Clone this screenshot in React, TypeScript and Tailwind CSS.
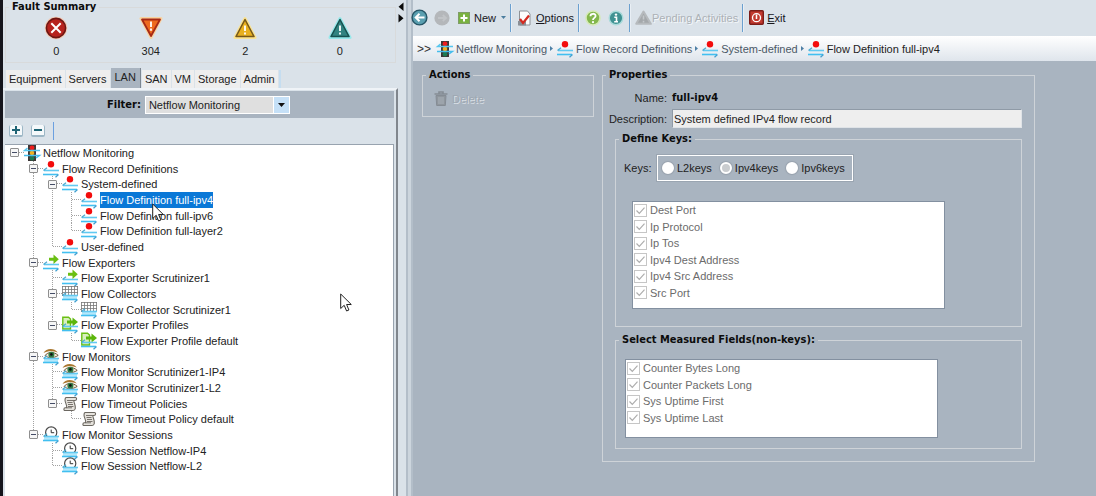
import type { ReactNode } from "react";

type IconName = "traffic" | "record" | "exporter" | "collector" | "profile" | "monitor" | "policy" | "session";

type TreeItem = { label: string; icon: IconName; depth: number; open?: boolean; selected?: boolean };

const TREE: TreeItem[] = [
  { label: "Netflow Monitoring", icon: "traffic", depth: 0, open: true },
  { label: "Flow Record Definitions", icon: "record", depth: 1, open: true },
  { label: "System-defined", icon: "record", depth: 2, open: true },
  { label: "Flow Definition full-ipv4", icon: "record", depth: 3, selected: true },
  { label: "Flow Definition full-ipv6", icon: "record", depth: 3 },
  { label: "Flow Definition full-layer2", icon: "record", depth: 3 },
  { label: "User-defined", icon: "record", depth: 2 },
  { label: "Flow Exporters", icon: "exporter", depth: 1, open: true },
  { label: "Flow Exporter Scrutinizer1", icon: "exporter", depth: 2 },
  { label: "Flow Collectors", icon: "collector", depth: 2, open: true },
  { label: "Flow Collector Scrutinizer1", icon: "collector", depth: 3 },
  { label: "Flow Exporter Profiles", icon: "profile", depth: 2, open: true },
  { label: "Flow Exporter Profile default", icon: "profile", depth: 3 },
  { label: "Flow Monitors", icon: "monitor", depth: 1, open: true },
  { label: "Flow Monitor Scrutinizer1-IP4", icon: "monitor", depth: 2 },
  { label: "Flow Monitor Scrutinizer1-L2", icon: "monitor", depth: 2 },
  { label: "Flow Timeout Policies", icon: "policy", depth: 2, open: true },
  { label: "Flow Timeout Policy default", icon: "policy", depth: 3 },
  { label: "Flow Monitor Sessions", icon: "session", depth: 1, open: true },
  { label: "Flow Session Netflow-IP4", icon: "session", depth: 2 },
  { label: "Flow Session Netflow-L2", icon: "session", depth: 2 },
];

const TABS = ["Equipment", "Servers", "LAN", "SAN", "VM", "Storage", "Admin"];
const KEY_FIELDS = ["Dest Port", "Ip Protocol", "Ip Tos", "Ipv4 Dest Address", "Ipv4 Src Address", "Src Port"];
const MEASURED_FIELDS = ["Counter Bytes Long", "Counter Packets Long", "Sys Uptime First", "Sys Uptime Last"];

const STRONG = "font-['DejaVu_Sans_Condensed','Noto_Sans',sans-serif] font-bold text-[#0c0c0c]";

// true when another node follows at this depth before the branch closes
function continues(index: number, depth: number): boolean {
  for (let i = index + 1; i < TREE.length; i++) {
    if (TREE[i].depth < depth) return false;
    if (TREE[i].depth === depth) return true;
  }
  return false;
}

function FlowArrows({ filled }: { filled?: boolean }) {
  return (
    <g fill="none">
      {filled && <rect x="1" y="9" width="14" height="5" fill="#b5e8fb" />}
      <path d="M16 9.5H1" stroke="#62c9f1" strokeWidth="1.6" />
      <path d="M0.5 9.5L4 6.8" stroke="#4aa9d0" strokeWidth="1.2" />
      <path d="M0 13.5H15" stroke="#42bff0" strokeWidth="1.6" />
      <path d="M15.5 13.5L12.5 16.3" stroke="#3f9fd0" strokeWidth="1.2" />
    </g>
  );
}

function NodeIcon({ name }: { name: IconName }) {
  return (
    <svg width="16" height="16" viewBox="0 0 16 16" className="shrink-0 overflow-visible" aria-hidden="true">
      {name === "traffic" && (
        <>
          <rect x="4" y="0" width="8" height="16" fill="#3c3636" />
          <circle cx="8" cy="2.8" r="2.4" fill="#ee1c1c" />
          <circle cx="8" cy="8" r="2.3" fill="#f0b020" />
          <circle cx="8" cy="13.2" r="2.3" fill="#1b7a52" />
          <path d="M16 5.5H1M3.5 3L0.5 5.5H4" stroke="#55c6ef" strokeWidth="1.4" fill="none" />
          <path d="M0 10.5H15M12 13L15.5 10.5H12" stroke="#45bdec" strokeWidth="1.4" fill="none" />
        </>
      )}
      {name === "record" && (
        <>
          <FlowArrows />
          <circle cx="8" cy="3.3" r="3.2" fill="#f30c0c" />
        </>
      )}
      {name === "exporter" && (
        <>
          <FlowArrows />
          <path d="M6 2.8H10.5V-0.5L15.8 4.2L10.5 9V5.8H6Z" fill="#6abf13" />
        </>
      )}
      {name === "collector" && (
        <>
          <rect x="0.5" y="0.5" width="15" height="10" fill="#fff" />
          <path d="M0 0.5H16M0 3.5H16M0 6.5H16M0 9.5H16M0.5 0V10M3.5 0V10M6.5 0V10M9.5 0V10M12.5 0V10M15.5 0V10" stroke="#777" strokeWidth="0.8" />
          <FlowArrows filled />
        </>
      )}
      {name === "profile" && (
        <>
          <path d="M0.8 0.2H6.5L8.5 2V12H0.8Z" fill="#d9f0bd" stroke="#6abf13" strokeWidth="1.4" />
          <path d="M5 3.6H10.5V0.4L16 5L10.5 9.6V6.4H5Z" fill="#5cb60c" />
          <FlowArrows />
        </>
      )}
      {name === "monitor" && (
        <>
          <path d="M0.5 4C3 -0.8 11 -1.4 14.8 3.6C10 1.6 4.5 1.8 0.5 4Z" fill="#a9772f" />
          <path d="M2 6.5C5 2.6 11 2.4 15.2 6.4C11 9.4 5 9.4 2 6.5Z" fill="#f3ead9" stroke="#6b5534" strokeWidth="1" />
          <circle cx="8.4" cy="5.7" r="3" fill="#2f7d46" />
          <circle cx="8.4" cy="5.4" r="1.3" fill="#111" />
          <FlowArrows filled />
        </>
      )}
      {name === "policy" && (
        <>
          <path d="M4 1.5H13.5C15 1.5 15 4.5 13 4.5H11.8C11.8 7 13.8 9 13.3 12.5C13 14 12 14.5 11 14.5H3C1.5 14.5 1.5 11.8 3.2 11.8H4.6C5.2 8.5 3 7 3 4C3 2.5 3.4 1.8 4 1.5Z" fill="#e6e3dd" stroke="#6b6760" strokeWidth="1.1" />
          <path d="M5 4.5H11.8M5.5 6.5H10.5M6 8.5H11M6 10.5H11.5M4.6 11.8H10" stroke="#6b6760" strokeWidth="0.9" />
        </>
      )}
      {name === "session" && (
        <>
          <circle cx="8.2" cy="5.5" r="5.6" fill="#fff" stroke="#4a4a4a" strokeWidth="1.2" />
          <path d="M8.2 2.6V5.7H11.2" stroke="#333" fill="none" />
          <FlowArrows filled />
        </>
      )}
    </svg>
  );
}

function Guide({ top, bottom, across }: { top?: boolean; bottom?: boolean; across?: boolean }) {
  return (
    <svg width="19" height="100%" className="absolute inset-0" shapeRendering="crispEdges" aria-hidden="true">
      <g stroke="#a2a2a2" strokeDasharray="1 1">
        {top && <line x1="9.5" y1="0" x2="9.5" y2="50%" />}
        {bottom && <line x1="9.5" y1="50%" x2="9.5" y2="100%" />}
        {across && <line x1="9.5" y1="50%" x2="19" y2="50%" />}
      </g>
    </svg>
  );
}

function TreeRow({ item, index }: { item: TreeItem; index: number }) {
  const cells = Array.from({ length: item.depth + 1 }, (_, i) => i);
  return (
    <li className="flex min-h-0 items-center">
      {cells.map((level) => {
        const own = level === item.depth;
        const down = level > 0 && continues(index, level);
        return (
          <span key={level} className="relative flex h-full w-[19px] shrink-0 items-center justify-center">
            <Guide top={level > 0 && (own || down)} bottom={down} across={own} />
            {own && item.open && (
              <button type="button" aria-label={`Collapse ${item.label}`} className="relative flex size-[9px] items-center justify-center rounded-[1px] border border-[#8f8f8f] bg-[#f6f6f6]">
                <span className="h-px w-[5px] bg-[#444c66]" />
              </button>
            )}
          </span>
        );
      })}
      <span className="flex w-[19px] shrink-0 items-center">
        <NodeIcon name={item.icon} />
      </span>
      <span className={item.selected ? "bg-[#0a78d7] leading-[16px] text-white" : "leading-[16px]"}>{item.label}</span>
    </li>
  );
}

function Pointer({ className }: { className: string }) {
  return (
    <svg width="12" height="19" viewBox="0 0 12 19" className={`absolute ${className}`} aria-hidden="true">
      <path d="M0.7 1V15.5L4.2 12.3L6.6 18L8.9 17L6.6 11.5H11.3Z" fill="#fff" stroke="#222" />
    </svg>
  );
}

function FaultIcon({ kind }: { kind: string }) {
  return (
    <svg width="24" height="24" viewBox="0 0 24 24" aria-hidden="true">
      {kind === "critical" && (
        <>
          <circle cx="12" cy="12" r="11.2" fill="#f3c9b4" />
          <circle cx="12" cy="12" r="9.6" fill="#b7231d" stroke="#6d1713" strokeWidth="1.6" />
          <path d="M7.3 7.3L16.7 16.7M16.7 7.3L7.3 16.7" stroke="#fff" strokeWidth="2" />
        </>
      )}
      {kind === "major" && (
        <>
          <path d="M2 2.5H22L12 21.5Z" fill="#f8d3a0" stroke="#f8d3a0" strokeWidth="3" strokeLinejoin="round" />
          <path d="M3 3.5H21L12 20Z" fill="#ee6a1d" stroke="#a72a16" strokeWidth="1.8" strokeLinejoin="round" />
          <path d="M12 5.5V11M12 12.5V14.8" stroke="#fff" strokeWidth="1.8" />
        </>
      )}
      {kind === "minor" && (
        <>
          <path d="M12 2.5L22 21.5H2Z" fill="#fbe391" stroke="#fbe391" strokeWidth="3" strokeLinejoin="round" />
          <path d="M12 3.5L21 20.5H3Z" fill="#e8b01f" stroke="#77591a" strokeWidth="1.6" strokeLinejoin="round" />
          <path d="M12 9.5V15M12 16.5V18.5" stroke="#fff" strokeWidth="1.8" />
        </>
      )}
      {kind === "warning" && (
        <>
          <path d="M12 2.5L22 21.5H2Z" fill="#96e8ea" stroke="#96e8ea" strokeWidth="3" strokeLinejoin="round" />
          <path d="M12 3.5L21 20.5H3Z" fill="#318380" stroke="#17514f" strokeWidth="1.6" strokeLinejoin="round" />
          <path d="M12 9.5V15M12 16.5V18.5" stroke="#fff" strokeWidth="1.8" />
        </>
      )}
    </svg>
  );
}

const FAULTS = [
  { kind: "critical", count: 0 },
  { kind: "major", count: 304 },
  { kind: "minor", count: 2 },
  { kind: "warning", count: 0 },
];

function Group({ title, className, children }: { title: string; className: string; children: ReactNode }) {
  return (
    <fieldset className={`min-w-0 border border-[#ced3d8] ${className}`}>
      <legend className={`ml-[3px] px-[3px] leading-[14px] ${STRONG}`}>{title}</legend>
      {children}
    </fieldset>
  );
}

function CheckList({ items, className }: { items: string[]; className: string }) {
  return (
    <ul className={`grid w-[313px] auto-rows-fr border border-[#8390a0] bg-white pl-px text-[#6b6b6b] ${className}`}>
      {items.map((item) => (
        <li key={item} className="min-h-0">
          <label className="flex h-full items-center gap-[3px]">
            <span className="relative flex size-[13px]">
              <input type="checkbox" defaultChecked disabled className="size-[13px] appearance-none border border-[#c6c6c6] bg-white" />
              <svg width="13" height="13" viewBox="0 0 13 13" className="absolute inset-0" aria-hidden="true">
                <path d="M2.5 6.5L5.3 9.3L10.5 3.7" fill="none" stroke="#adadad" strokeWidth="1.2" />
              </svg>
            </span>
            {item}
          </label>
        </li>
      ))}
    </ul>
  );
}

function Sep() {
  return <span className="h-7 w-[2px] shrink-0 border-l border-[#6ba0cf] bg-[#e9eff5]" />;
}

function FaultSummary() {
  return (
    <fieldset className="mx-0.5 h-[63px] min-w-0 border border-[#d8dadb]">
      <legend className={`ml-[3px] px-[3px] leading-[14px] ${STRONG}`}>Fault Summary</legend>
      <ul className="mr-2 ml-[3px] grid grid-cols-4 pt-0.5 text-center">
        {FAULTS.map((f) => (
          <li key={f.kind} className="flex flex-col items-center">
            <FaultIcon kind={f.kind} />
            <span className="mt-1 leading-[14px]">{f.count}</span>
          </li>
        ))}
      </ul>
    </fieldset>
  );
}

function Sidebar() {
  return (
    <aside className="flex w-[398px] shrink-0 flex-col border-l-[3px] border-[#15151c]">
      <FaultSummary />
      <nav className="mt-[5px] ml-[3px] flex h-5 items-end gap-px" role="tablist">
        {TABS.map((tab) => (
          <button
            key={tab}
            type="button"
            role="tab"
            aria-selected={tab === "LAN"}
            className={
              tab === "LAN"
                ? "h-5 border-r border-[#7d8792] bg-[#a9b4c0] px-1 pb-0.5 leading-[14px]"
                : "h-[18px] bg-[#eeeeee] px-[3px] leading-[14px]"
            }
          >
            {tab}
          </button>
        ))}
        <span className="h-[18px] w-0.5 bg-[#c5ddf0]" />
      </nav>
      <div className="flex flex-1 flex-col border-t-2 border-r-2 border-t-[#eff3f7] border-r-[#80868d] pt-[1px] pr-0.5 pl-0.5">
        <div className="flex h-[27px] items-center justify-center bg-[#a9b4c0] pr-0.5">
          <label htmlFor="filter" className={`mr-1 ${STRONG}`}>Filter:</label>
          <span className="relative flex">
            <select id="filter" className="h-[18px] w-[145px] appearance-none border border-white bg-[#dfdfdf] pl-[3px] leading-[14px] text-[#222]">
              <option>Netflow Monitoring</option>
            </select>
            <span className="pointer-events-none absolute inset-y-px right-px flex w-4 items-center justify-center border-l border-white bg-[#c5e0f7]">
              <svg width="7" height="4" viewBox="0 0 7 4" aria-hidden="true"><path d="M0 0H7L3.5 4Z" fill="#111" /></svg>
            </span>
          </span>
        </div>
        <div className="flex h-[26px] items-center pl-1">
          {["Expand all", "Collapse all"].map((label, i) => (
            <button key={label} type="button" aria-label={label} className="mr-2 flex h-[12px] w-[14px] items-center justify-center rounded-[2px] border-x border-b-2 border-[#9db7c6] bg-[#f5f9fb]">
              <svg width="8" height="8" viewBox="0 0 8 8" aria-hidden="true">
                <path d={i === 0 ? "M0 4H8M4 0V8" : "M0 4H8"} stroke="#1e6475" strokeWidth="2" />
              </svg>
            </button>
          ))}
          <span className="h-[18px] w-px bg-[#6ba0e0]" />
        </div>
        <div className="flex-1 border-t border-r border-[#98a3af] bg-white">
          <ul className="grid h-[329px] auto-rows-fr whitespace-nowrap text-[#222]">
            {TREE.map((item, i) => <TreeRow key={item.label} item={item} index={i} />)}
          </ul>
        </div>
      </div>
    </aside>
  );
}

function Toolbar() {
  return (
    <header className="flex h-9 items-center pb-px text-[#16161c]">
      <button type="button" aria-label="Back" className="ml-[-2px] flex">
        <svg width="17" height="17" viewBox="0 0 17 17">
          <circle cx="8.5" cy="8.5" r="7.4" fill="#5a9fb0" stroke="#265566" strokeWidth="1.4" />
          <path d="M13.5 8.5H5M8.5 4.8L4.7 8.5L8.5 12.2" stroke="#fff" strokeWidth="2" fill="none" />
        </svg>
      </button>
      <button type="button" aria-label="Forward" disabled className="ml-[6px] flex">
        <svg width="16" height="16" viewBox="0 0 16 16">
          <circle cx="8" cy="8" r="7.6" fill="#b4b7ba" />
          <path d="M4 8H12M8.8 5L12 8L8.8 11" stroke="#c1c4c7" strokeWidth="1.8" fill="none" />
        </svg>
      </button>
      <button type="button" className="ml-[8px] flex items-center gap-[4px]">
        <svg width="12" height="12" viewBox="0 0 12 12">
          <rect x="0.5" y="0.5" width="11" height="11" fill="#79b240" stroke="#7f9c68" />
          <path d="M2.5 6H9.5M6 2.5V9.5" stroke="#fff" strokeWidth="2" />
        </svg>
        New
        <svg width="5" height="3" viewBox="0 0 5 3" className="mr-1 ml-[1px]"><path d="M0 0H5L2.5 3Z" fill="#4b7d9e" /></svg>
      </button>
      <Sep />
      <button type="button" className="mr-[4px] ml-[5px] flex items-center gap-[4px]">
        <svg width="15" height="16" viewBox="0 0 15 16">
          <path d="M2.5 1H10.5L13 4V15H2.5Z" fill="#fdfdfd" stroke="#8d9297" />
          <path d="M1 11H9V15.5H1Z" fill="#8a8f96" />
          <path d="M3 9L6 13L12 5.5" stroke="#d42a20" strokeWidth="2.2" fill="none" />
        </svg>
        <span><u>O</u>ptions</span>
      </button>
      <Sep />
      <button type="button" aria-label="Help" className="ml-[5px] flex">
        <svg width="16" height="16" viewBox="0 0 16 16">
          <circle cx="8" cy="8" r="7" fill="#83b74c" stroke="#d5e9b6" strokeWidth="1.6" />
          <path d="M5.4 6.2C5.4 3 10.6 3 10.6 6C10.6 8 8 7.8 8 10" stroke="#fff" strokeWidth="1.8" fill="none" />
          <circle cx="8" cy="12.2" r="1.1" fill="#fff" />
        </svg>
      </button>
      <button type="button" aria-label="About" className="mr-[5px] ml-[7px] flex">
        <svg width="16" height="16" viewBox="0 0 16 16">
          <circle cx="8" cy="8" r="6.8" fill="#3f9192" stroke="#a9dada" strokeWidth="1.4" />
          <circle cx="8" cy="4.6" r="1.2" fill="#fff" />
          <path d="M6.3 7.3H8.5V11.5M6.2 11.7H10" stroke="#fff" strokeWidth="1.6" fill="none" />
        </svg>
      </button>
      <Sep />
      <button type="button" disabled className="mr-[4px] ml-[4px] flex items-center text-[#acb1b6] [text-shadow:1px_1px_0_#f4f7f9]">
        <svg width="17" height="15" viewBox="0 0 17 15">
          <path d="M8.5 1.5L15.8 13.8H1.2Z" fill="#a4a8ab" stroke="#b6babd" strokeWidth="2" strokeLinejoin="round" />
          <path d="M8.5 5.5V9.5M8.5 10.8V12.4" stroke="#c4c8cb" strokeWidth="1.6" />
        </svg>
        Pending Activities
      </button>
      <Sep />
      <button type="button" className="ml-[5px] flex items-center gap-[3px]">
        <svg width="15" height="15" viewBox="0 0 15 15">
          <rect x="0.7" y="0.7" width="13.6" height="13.6" rx="1" fill="#c23a30" stroke="#7c1d18" strokeWidth="1.4" />
          <circle cx="7.5" cy="7.7" r="4" fill="none" stroke="#fff" strokeWidth="1.3" />
          <path d="M7.5 4.5V9" stroke="#fff" strokeWidth="1.5" />
        </svg>
        <span><u>E</u>xit</span>
      </button>
    </header>
  );
}

const CRUMBS: { label: string; icon: IconName }[] = [
  { label: "Netflow Monitoring", icon: "traffic" },
  { label: "Flow Record Definitions", icon: "record" },
  { label: "System-defined", icon: "record" },
  { label: "Flow Definition full-ipv4", icon: "record" },
];

function Breadcrumb() {
  return (
    <nav aria-label="Breadcrumb" className="flex h-[25px] items-center bg-linear-to-b from-white to-[#dfe5ec] pl-1 whitespace-nowrap text-[#4b5866]">
      <span className="mr-[6px] text-xs text-[#333]">&gt;&gt;</span>
      {CRUMBS.map((c, i) => (
        <span key={c.label} className="flex items-center">
          <a href="#" className={i === CRUMBS.length - 1 ? "flex items-center gap-[3px] text-[#222]" : "flex items-center gap-[3px]"}>
            <NodeIcon name={c.icon} />
            {c.label}
          </a>
          {i < CRUMBS.length - 1 && (
            <svg width="3" height="5" viewBox="0 0 3 5" className="mr-1 ml-[3px]" aria-hidden="true"><path d="M0 0L3 2.5L0 5Z" fill="#4d7fa5" /></svg>
          )}
        </span>
      ))}
    </nav>
  );
}

function Properties() {
  return (
    <Group title="Properties" className="w-[433px] pb-3">
      <div className="mx-3">
        <dl className="mt-[9px] flex h-[14px] items-center leading-[14px]">
          <dt className="w-[52px] text-right">Name:</dt>
          <dd className={`ml-[5px] leading-[14px] ${STRONG}`}>full-ipv4</dd>
        </dl>
        <div className="mt-1 -ml-2 flex items-center">
          <label htmlFor="description" className="w-[60px] text-right whitespace-nowrap">Description:</label>
          <input
            id="description"
            readOnly
            defaultValue="System defined IPv4 flow record"
            className="ml-[5px] h-[19px] min-w-0 flex-1 border border-t-[#8f9aa6] border-r-[#dfe3e7] border-b-[#dfe3e7] border-l-[#8f9aa6] bg-[#eeeeee] px-px text-[#222]"
          />
        </div>
        <Group title="Define Keys:" className="mt-1 h-[195px]">
          <div className="mt-[9px] ml-2 flex items-center" role="radiogroup" aria-label="Keys">
            <span className="w-[33px]">Keys:</span>
            <div className="flex h-[26px] w-[196px] items-center border border-white px-1 outline outline-[#9aa5b1]">
              {["L2keys", "Ipv4keys", "Ipv6keys"].map((key) => (
                <label key={key} className="mr-2 flex items-center gap-[3px] whitespace-nowrap last:mr-0">
                  <input
                    type="radio"
                    name="keys"
                    defaultChecked={key === "Ipv4keys"}
                    className="size-[12px] appearance-none rounded-full border-2 border-white bg-white shadow-[0_0_1px_1px_#98a2ad] checked:bg-[#c9cccf]"
                  />
                  {key}
                </label>
              ))}
            </div>
          </div>
          <CheckList items={KEY_FIELDS} className="mt-[20px] ml-4 h-[108px] pb-[7px]" />
        </Group>
        <Group title="Select Measured Fields(non-keys):" className="mt-[6px] h-[116px]">
          <CheckList items={MEASURED_FIELDS} className="mt-[12px] ml-[9px] h-[79px] pb-[11px]" />
        </Group>
      </div>
    </Group>
  );
}

export default function App() {
  return (
    <div className="relative flex min-h-screen overflow-hidden bg-[#dae2e9] font-['Liberation_Sans',Arial,sans-serif] text-[11px] leading-[14px] text-[#222]">
      <Sidebar />
      <div className="flex w-[15px] shrink-0 justify-between">
        <svg width="6" height="24" viewBox="0 0 6 24" aria-hidden="true">
          <path d="M5.5 2.5V11L0.5 6.8ZM0.5 14V22.5L5.5 18.2Z" fill="#0a0a0a" />
        </svg>
        <span className="w-[7px] border-x-2 border-[#b3bec9] bg-[#ccd5dd]" />
      </div>
      <main className="flex min-w-0 flex-1 flex-col">
        <Toolbar />
        <Breadcrumb />
        <div className="flex flex-1 items-start gap-2 bg-[#a9b4c0] pt-[7px] pl-[9px]">
          <Group title="Actions" className="h-[49px] w-[172px]">
            <button type="button" disabled className="mt-[9px] ml-[11px] flex items-center gap-1 text-[#9ea8b2] [text-shadow:1px_1px_0_#d9dfe5]">
              <svg width="14" height="15" viewBox="0 0 14 15" aria-hidden="true">
                <path d="M0.5 3H13.5M5 2.5V1H9V2.5" stroke="#858c94" strokeWidth="1.6" fill="none" />
                <path d="M2 4.5H12L11.3 14.5H2.7Z" fill="#8f969d" stroke="#858c94" />
                <path d="M5 6V13M7 6V13M9 6V13" stroke="#aab2ba" />
              </svg>
              Delete
            </button>
          </Group>
          <Properties />
        </div>
      </main>
      <Pointer className="top-[203px] left-[152px]" />
      <Pointer className="top-[293px] left-[340px]" />
    </div>
  );
}
